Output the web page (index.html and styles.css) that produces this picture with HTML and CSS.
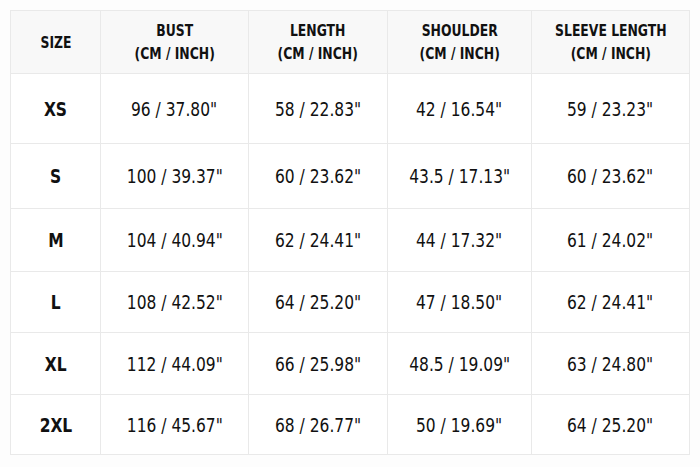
FILE: index.html
```html
<!DOCTYPE html>
<html lang="en">
<head>
<meta charset="utf-8">
<title>Size Chart</title>
<link rel="stylesheet" href="styles.css">
</head>
<body>
<table class="size-chart">
  <colgroup>
    <col class="c-size"><col class="c-bust"><col class="c-length"><col class="c-shoulder"><col class="c-sleeve">
  </colgroup>
  <thead>
    <tr class="head">
      <th><span class="t">SIZE</span></th>
      <th><span class="t">BUST<br>(CM / INCH)</span></th>
      <th><span class="t">LENGTH<br>(CM / INCH)</span></th>
      <th><span class="t">SHOULDER<br>(CM / INCH)</span></th>
      <th><span class="t">SLEEVE LENGTH<br>(CM / INCH)</span></th>
    </tr>
  </thead>
  <tbody>
    <tr class="r1"><th><span class="t">XS</span></th><td><span class="t">96 / 37.80"</span></td><td><span class="t">58 / 22.83"</span></td><td><span class="t">42 / 16.54"</span></td><td><span class="t">59 / 23.23"</span></td></tr>
    <tr class="r2"><th><span class="t">S</span></th><td><span class="t">100 / 39.37"</span></td><td><span class="t">60 / 23.62"</span></td><td><span class="t">43.5 / 17.13"</span></td><td><span class="t">60 / 23.62"</span></td></tr>
    <tr class="r3"><th><span class="t">M</span></th><td><span class="t">104 / 40.94"</span></td><td><span class="t">62 / 24.41"</span></td><td><span class="t">44 / 17.32"</span></td><td><span class="t">61 / 24.02"</span></td></tr>
    <tr class="r4"><th><span class="t">L</span></th><td><span class="t">108 / 42.52"</span></td><td><span class="t">64 / 25.20"</span></td><td><span class="t">47 / 18.50"</span></td><td><span class="t">62 / 24.41"</span></td></tr>
    <tr class="r5"><th><span class="t">XL</span></th><td><span class="t">112 / 44.09"</span></td><td><span class="t">66 / 25.98"</span></td><td><span class="t">48.5 / 19.09"</span></td><td><span class="t">63 / 24.80"</span></td></tr>
    <tr class="r6"><th><span class="t">2XL</span></th><td><span class="t">116 / 45.67"</span></td><td><span class="t">68 / 26.77"</span></td><td><span class="t">50 / 19.69"</span></td><td><span class="t">64 / 25.20"</span></td></tr>
  </tbody>
</table>
</body>
</html>
```
FILE: styles.css
```css
html, body {
  margin: 0;
  padding: 0;
  background: #fdfdfd;
}
body {
  padding: 10px 0 0 10px;
  font-family: "DejaVu Sans Condensed", "Liberation Sans", sans-serif;
  color: #111;
}
.size-chart {
  border-collapse: collapse;
  table-layout: fixed;
  width: 679px;
  background: #fff;
}
.c-size { width: 90px; }
.c-bust { width: 148px; }
.c-length { width: 139px; }
.c-shoulder { width: 144px; }
.c-sleeve { width: 158px; }
.size-chart th,
.size-chart td {
  border: 1px solid #e9e9e9;
  text-align: center;
  vertical-align: middle;
  padding: 0;
}
.t {
  display: inline-block;
  transform: scaleX(0.86);
  white-space: nowrap;
}
.head th {
  background: #f8f8f8;
  font-size: 16px;
  font-weight: bold;
  line-height: 23px;
  height: 62px;
}
tbody th {
  font-size: 20px;
  font-weight: bold;
}
tbody td {
  font-size: 20px;
  font-weight: normal;
}
.r1 th, .r1 td { height: 69px; }
.r2 th, .r2 td { height: 64px; }
.r3 th, .r3 td { height: 62px; }
.r4 th, .r4 td { height: 60px; }
.r5 th, .r5 td { height: 61px; }
.r6 th, .r6 td { height: 59px; }
```
